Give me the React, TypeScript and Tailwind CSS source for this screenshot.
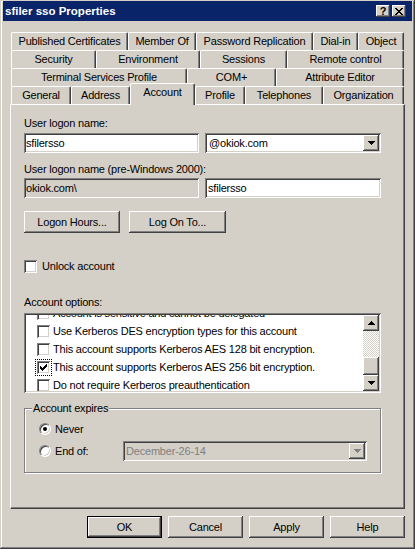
import React from "react";

// classic 3D bevels, drawn with inset shadows so they take no layout space
const raised =
  "bg-[#d4d0c8] shadow-[inset_-1px_-1px_0_#404040,inset_1px_1px_0_#ffffff,inset_-2px_-2px_0_#808080,inset_2px_2px_0_#d4d0c8]";
const sunken =
  "shadow-[inset_1px_1px_0_#808080,inset_-1px_-1px_0_#ffffff,inset_2px_2px_0_#404040,inset_-2px_-2px_0_#d4d0c8]";

type Tab = { label: string; w: string; active?: boolean };

const tabRows: Tab[][] = [
  [
    { label: "Published Certificates", w: "w-[117px]" },
    { label: "Member Of", w: "w-[68px]" },
    { label: "Password Replication", w: "w-[117px]" },
    { label: "Dial-in", w: "w-[45px]" },
    { label: "Object", w: "w-[46px]" },
  ],
  [
    { label: "Security", w: "w-[85px]" },
    { label: "Environment", w: "w-[104px]" },
    { label: "Sessions", w: "w-[87px]" },
    { label: "Remote control", w: "w-[117px]" },
  ],
  [
    { label: "Terminal Services Profile", w: "w-[176px]" },
    { label: "COM+", w: "w-[89px]" },
    { label: "Attribute Editor", w: "w-[128px]" },
  ],
  [
    { label: "General", w: "w-[60px]" },
    { label: "Address", w: "w-[59px]" },
    { label: "Account", w: "w-[65px]", active: true },
    { label: "Profile", w: "w-[50px]" },
    { label: "Telephones", w: "w-[78px]" },
    { label: "Organization", w: "w-[81px]" },
  ],
];

const listItems = [
  { text: "Account is sensitive and cannot be delegated", checked: false },
  { text: "Use Kerberos DES encryption types for this account", checked: false },
  { text: "This account supports Kerberos AES 128 bit encryption.", checked: false },
  { text: "This account supports Kerberos AES 256 bit encryption.", checked: true, focus: true },
  { text: "Do not require Kerberos preauthentication", checked: false },
];

// pixel bitmaps: [x, y, width]
const checkPixels = [
  [6, 0, 1],
  [5, 1, 2],
  [0, 2, 1],
  [4, 2, 3],
  [0, 3, 2],
  [3, 3, 3],
  [0, 4, 5],
  [1, 5, 3],
  [2, 6, 1],
];
const closePixels = [
  [0, 0, 2],
  [6, 0, 2],
  [1, 1, 2],
  [5, 1, 2],
  [2, 2, 4],
  [3, 3, 2],
  [2, 4, 4],
  [1, 5, 2],
  [5, 5, 2],
  [0, 6, 2],
  [6, 6, 2],
];

function Pixels({ rows, w, h, color }: { rows: number[][]; w: number; h: number; color: string }) {
  return (
    <svg width={w} height={h} viewBox={`0 0 ${w} ${h}`} shapeRendering="crispEdges">
      {rows.map(([x, y, rw], i) => (
        <rect key={i} x={x} y={y} width={rw} height={1} fill={color} />
      ))}
    </svg>
  );
}

function Arrow({ up, color = "#000000" }: { up?: boolean; color?: string }) {
  const rows = up
    ? [
        [3, 0, 1],
        [2, 1, 3],
        [1, 2, 5],
        [0, 3, 7],
      ]
    : [
        [0, 0, 7],
        [1, 1, 5],
        [2, 2, 3],
        [3, 3, 1],
      ];
  return <Pixels rows={rows} w={7} h={4} color={color} />;
}

function DropButton({ disabled }: { disabled?: boolean }) {
  return (
    <div className={`flex h-[16px] w-[16px] shrink-0 items-center justify-center ${raised}`}>
      <Arrow color={disabled ? "#808080" : "#000000"} />
    </div>
  );
}

function Checkbox({ checked, focus }: { checked?: boolean; focus?: boolean }) {
  return (
    <div
      className={`flex h-[13px] w-[13px] shrink-0 items-center justify-center bg-white ${sunken} ${
        focus ? "outline-1 outline-offset-1 outline-dotted outline-black" : ""
      }`}
    >
      {checked && <Pixels rows={checkPixels} w={7} h={7} color="#000000" />}
    </div>
  );
}

function Radio({ checked }: { checked?: boolean }) {
  return (
    <div className="flex h-[12px] w-[12px] shrink-0 items-center justify-center rounded-full border border-[#808080] border-r-white border-b-white bg-white shadow-[inset_1px_1px_0_#404040,inset_-1px_-1px_0_#d4d0c8]">
      {checked && <div className="h-[4px] w-[4px] rounded-full bg-black" />}
    </div>
  );
}

function Button({ label, w, isDefault }: { label: string; w: string; isDefault?: boolean }) {
  return (
    <div
      className={`flex h-[22px] items-center justify-center ${w} ${raised} ${
        isDefault ? "border border-black" : ""
      }`}
    >
      {label}
    </div>
  );
}

function TabItem({ tab }: { tab: Tab }) {
  if (tab.active) {
    return (
      <div
        className={`${tab.w} relative z-10 -mt-[3px] flex h-[22px] shrink-0 items-center justify-center rounded-t-[2px] border-t border-l border-white border-r border-r-[#404040] bg-[#d4d0c8] pb-[4px] shadow-[inset_-1px_0_0_#808080]`}
      >
        {tab.label}
      </div>
    );
  }
  return (
    <div
      className={`${tab.w} flex h-[18px] shrink-0 items-center justify-center rounded-t-[2px] border-t border-l border-white border-r border-r-[#404040] shadow-[inset_-1px_0_0_#808080]`}
    >
      {tab.label}
    </div>
  );
}

export default function App() {
  return (
    <div className="h-[549px] w-[415px] overflow-hidden bg-[#d4d0c8] px-[3px] pt-[1px] font-['Liberation_Sans',Arial,sans-serif] text-[11px] leading-[13px] tracking-[-0.2px] text-black shadow-[inset_-1px_-1px_0_#404040,inset_1px_1px_0_#d4d0c8,inset_-2px_-2px_0_#808080,inset_2px_2px_0_#ffffff]">
      {/* Title bar */}
      <div className="flex h-[20px] items-center justify-between bg-[#0a246a] pr-[6px] pl-[2px]">
        <span className="text-[11.5px] font-bold tracking-normal text-white">sfiler sso Properties</span>
        <div className="flex gap-[2px]">
          <div className={`flex h-[12px] w-[14px] items-center justify-center text-[11px] font-bold ${raised}`}>
            ?
          </div>
          <div className={`flex h-[12px] w-[14px] items-center justify-center ${raised}`}>
            <Pixels rows={closePixels} w={8} h={7} color="#000000" />
          </div>
        </div>
      </div>

      {/* Tabs */}
      <div className="mt-[11px] ml-[8px] flex w-[393px] flex-col">
        {tabRows.map((row, i) => (
          <div key={i} className="flex h-[18px] items-start">
            {row.map((tab) => (
              <TabItem key={tab.label} tab={tab} />
            ))}
          </div>
        ))}
      </div>

      {/* Page */}
      <div className="ml-[7px] flex h-[405px] w-[395px] flex-col border border-white border-r-[#404040] border-b-[#404040] pl-[13px] shadow-[inset_-1px_-1px_0_#808080]">
        <div className="mt-[12px]">User logon name:</div>
        <div className="mt-[3px] flex gap-[6px]">
          <div className={`flex h-[20px] w-[175px] items-center bg-white pl-[2px] ${sunken}`}>sfilersso</div>
          <div className={`flex h-[20px] w-[176px] items-center justify-between bg-white pr-[2px] pl-[4px] ${sunken}`}>
            <span>@okiok.com</span>
            <DropButton />
          </div>
        </div>

        <div className="mt-[10px]">User logon name (pre-Windows 2000):</div>
        <div className="mt-[2px] flex gap-[6px]">
          <div className={`flex h-[20px] w-[175px] items-center bg-[#d4d0c8] pl-[2px] ${sunken}`}>okiok.com\</div>
          <div className={`flex h-[20px] w-[176px] items-center bg-white pl-[3px] ${sunken}`}>sfilersso</div>
        </div>

        <div className="mt-[13px] flex gap-[9px]">
          <Button label="Logon Hours..." w="w-[96px]" />
          <Button label="Log On To..." w="w-[97px]" />
        </div>

        <div className="mt-[27px] flex h-[13px] items-center gap-[5px]">
          <Checkbox />
          <span>Unlock account</span>
        </div>

        <div className="mt-[23px]">Account options:</div>
        <div className={`mt-[4px] flex h-[80px] w-[357px] bg-white p-[2px] ${sunken}`}>
          <div className="flex-1 overflow-hidden">
            <div className="-mt-[11px] flex flex-col">
              {listItems.map((item) => (
                <div key={item.text} className="flex h-[18px] items-center gap-[3px] pl-[11px]">
                  <Checkbox checked={item.checked} focus={item.focus} />
                  <span>{item.text}</span>
                </div>
              ))}
            </div>
          </div>
          <div className="flex w-[16px] flex-col">
            <div className={`flex h-[16px] items-center justify-center ${raised}`}>
              <Arrow up />
            </div>
            <div className="h-[26px] bg-[image:repeating-conic-gradient(#ffffff_0_25%,#d4d0c8_0_50%)] bg-[length:2px_2px]" />
            <div className={`h-[18px] ${raised}`} />
            <div className={`flex h-[16px] items-center justify-center ${raised}`}>
              <Arrow />
            </div>
          </div>
        </div>

        {/* Account expires group */}
        <div className="relative mt-[15px] flex h-[65px] w-[357px] flex-col border border-[#808080] pl-[14px] shadow-[inset_1px_1px_0_#ffffff,1px_1px_0_#ffffff]">
          <span className="absolute -top-[7px] left-[7px] bg-[#d4d0c8] px-[1px]">Account expires</span>
          <div className="mt-[13px] flex h-[14px] items-center gap-[4px]">
            <Radio checked />
            <span>Never</span>
          </div>
          <div className="mt-[5px] flex h-[20px] items-center">
            <Radio />
            <span className="ml-[4px] w-[68px]">End of:</span>
            <div className={`flex h-[20px] w-[244px] items-center justify-between bg-[#d4d0c8] pr-[2px] pl-[3px] text-[#808080] ${sunken}`}>
              <span>December-26-14</span>
              <DropButton disabled />
            </div>
          </div>
        </div>
      </div>

      {/* Dialog buttons */}
      <div className="mt-[7px] ml-[7px] flex w-[395px] justify-end gap-[6px]">
        <Button label="OK" w="w-[75px]" isDefault />
        <Button label="Cancel" w="w-[75px]" />
        <Button label="Apply" w="w-[75px]" />
        <Button label="Help" w="w-[75px]" />
      </div>
    </div>
  );
}
